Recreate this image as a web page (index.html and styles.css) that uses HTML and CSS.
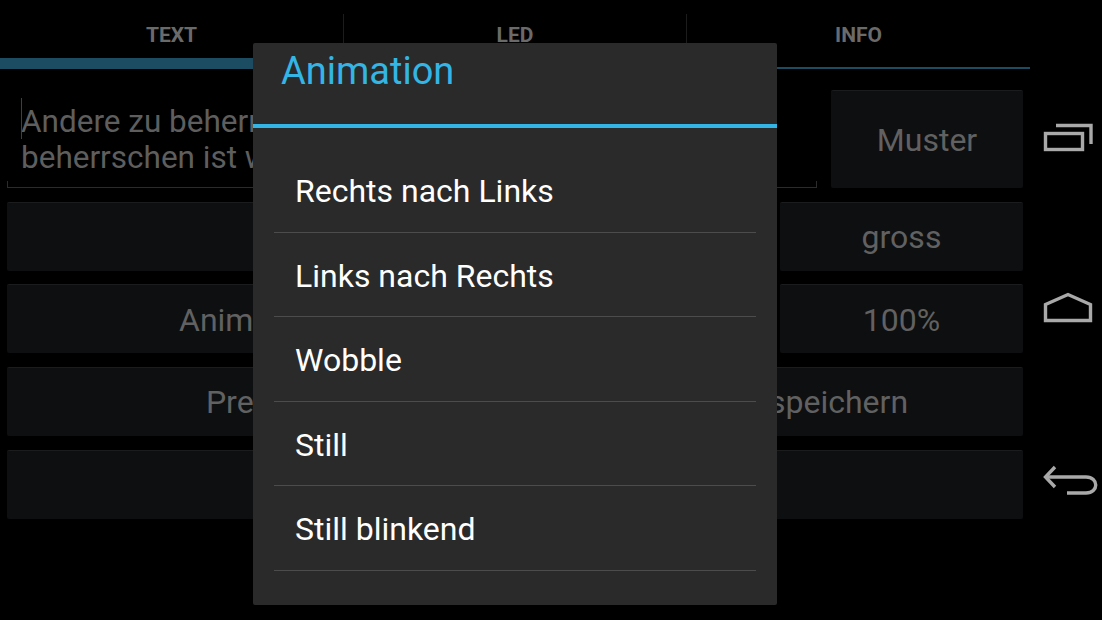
FILE: index.html
```html
<!DOCTYPE html>
<html lang="de">
<head>
<meta charset="utf-8">
<title>Animation</title>
<link rel="stylesheet" href="styles.css">
</head>
<body>
<div class="screen">
  <main class="app">
    <nav class="tabs">
      <div class="tab active"><span class="tab-label">TEXT</span></div>
      <div class="tab"><span class="tab-label divided">LED</span></div>
      <div class="tab last"><span class="tab-label divided">INFO</span></div>
    </nav>
    <div class="content">
      <div class="editor">
        <div class="field">
          <span class="caret"></span>
          <p class="field-text">Andere zu beherrschen ist Kraft, sich selbst<br>beherrschen ist wahre Macht</p>
        </div>
        <button class="btn muster">Muster</button>
      </div>
      <div class="row">
        <button class="btn grow"></button>
        <button class="btn side">gross</button>
      </div>
      <div class="row">
        <button class="btn anim">Animation</button>
        <button class="btn grow"></button>
        <button class="btn side">100%</button>
      </div>
      <div class="row">
        <button class="btn half">Presets</button>
        <button class="btn grow right-wide">Presets speichern</button>
      </div>
      <div class="row">
        <button class="btn grow"></button>
      </div>
    </div>
  </main>
  <aside class="sysnav">
    <svg class="navicon" viewBox="0 0 72 60" width="72" height="60" aria-label="Zuletzt verwendet">
      <rect x="15.5" y="25.5" width="37" height="16"/>
      <path d="M26 17.5H61V36"/>
    </svg>
    <svg class="navicon" viewBox="0 0 72 60" width="72" height="60" aria-label="Start">
      <path d="M15.5 26.5L38 16.5L60.5 26.5V42.5H15.5Z"/>
    </svg>
    <svg class="navicon" viewBox="0 0 72 60" width="72" height="60" aria-label="Zurück">
      <path d="M25 19L15.5 29L25 39"/>
      <path d="M16 29H56C69 29 69 45 56 45H37"/>
    </svg>
  </aside>

  <section class="dialog">
    <h1 class="dialog-title">Animation</h1>
    <ul class="dialog-list">
      <li>Rechts nach Links</li>
      <li>Links nach Rechts</li>
      <li>Wobble</li>
      <li>Still</li>
      <li>Still blinkend</li>
    </ul>
  </section>
</div>
</body>
</html>
```
FILE: styles.css
```css
* { box-sizing: border-box; }
html, body { margin: 0; padding: 0; background: #000; }
.screen {
  position: relative;
  display: flex;
  width: 1102px;
  height: 620px;
  overflow: hidden;
  font-family: Roboto, "Liberation Sans", sans-serif;
  background: #000;
}
.app { width: 1030px; flex: none; }
.sysnav {
  width: 72px;
  flex: none;
  display: flex;
  flex-direction: column;
  gap: 110px;
  padding-top: 108px;
}
.navicon { display: block; fill: none; stroke: #a9a9a9; stroke-width: 3.4; }

.tabs { display: flex; height: 69px; }
.tab {
  width: 343px;
  flex: none;
  padding-top: 14px;
  border-bottom: 2px solid #1b4c61;
}
.tab.last { width: 344px; }
.tab.active { border-bottom-width: 11px; }
.tab-label {
  display: flex;
  align-items: center;
  justify-content: center;
  height: 42px;
  font-size: 21px;
  font-weight: 700;
  color: #6a6a6a;
}
.tab-label.divided { border-left: 1px solid #1c1c1c; }

.content {
  display: flex;
  flex-direction: column;
  gap: 13.67px;
  padding: 21px 7px 0;
  width: 1030px;
}
.editor { display: flex; gap: 14px; height: 98px; }
.field {
  position: relative;
  flex: 1;
  height: 98px;
  border-bottom: 1px solid #2b2b2b;
  padding: 14px 14px 0;
}
.field::before, .field::after {
  content: "";
  position: absolute;
  bottom: 0;
  width: 1px;
  height: 6px;
  background: #2b2b2b;
}
.field::before { left: 0; }
.field::after { right: 0; }
.caret {
  position: absolute;
  left: 14px;
  top: 8px;
  width: 1px;
  height: 41px;
  background: #3f3f3f;
}
.field-text {
  margin: 0;
  font-size: 31.5px;
  line-height: 36px;
  color: #5e5e5e;
  white-space: nowrap;
  overflow: hidden;
}
.btn {
  display: block;
  border: 0;
  border-top: 1px solid #1b1c1d;
  border-radius: 2px;
  background: #0e0f11;
  color: #616161;
  font-family: inherit;
  font-size: 32px;
  padding: 1px 0 0;
}
.muster { width: 192px; height: 98px; }
.row { display: flex; gap: 13px; height: 69px; }
.row .btn { height: 69px; }
.grow { flex: 1; }
.side { width: 243px; }
.anim { width: 490px; }
.half { width: 506px; }
.right-wide { padding-left: 12px; }

.dialog {
  position: absolute;
  left: 253px;
  top: 43px;
  width: 524px;
  height: 562px;
  background: #2a2a2a;
  border-radius: 2px;
}
.dialog-title {
  margin: 0;
  height: 85px;
  padding: 4px 0 0 28px;
  border-bottom: 4px solid #33b5e5;
  font-size: 38px;
  line-height: 48px;
  font-weight: 400;
  color: #33b5e5;
}
.dialog-list {
  list-style: none;
  margin: 20px 21px 0;
  padding: 0;
}
.dialog-list li {
  height: 84.5px;
  padding: 3px 0 0 21px;
  display: flex;
  align-items: center;
  border-bottom: 1px solid #4c4c4c;
  font-size: 32px;
  color: #fff;
}
```
